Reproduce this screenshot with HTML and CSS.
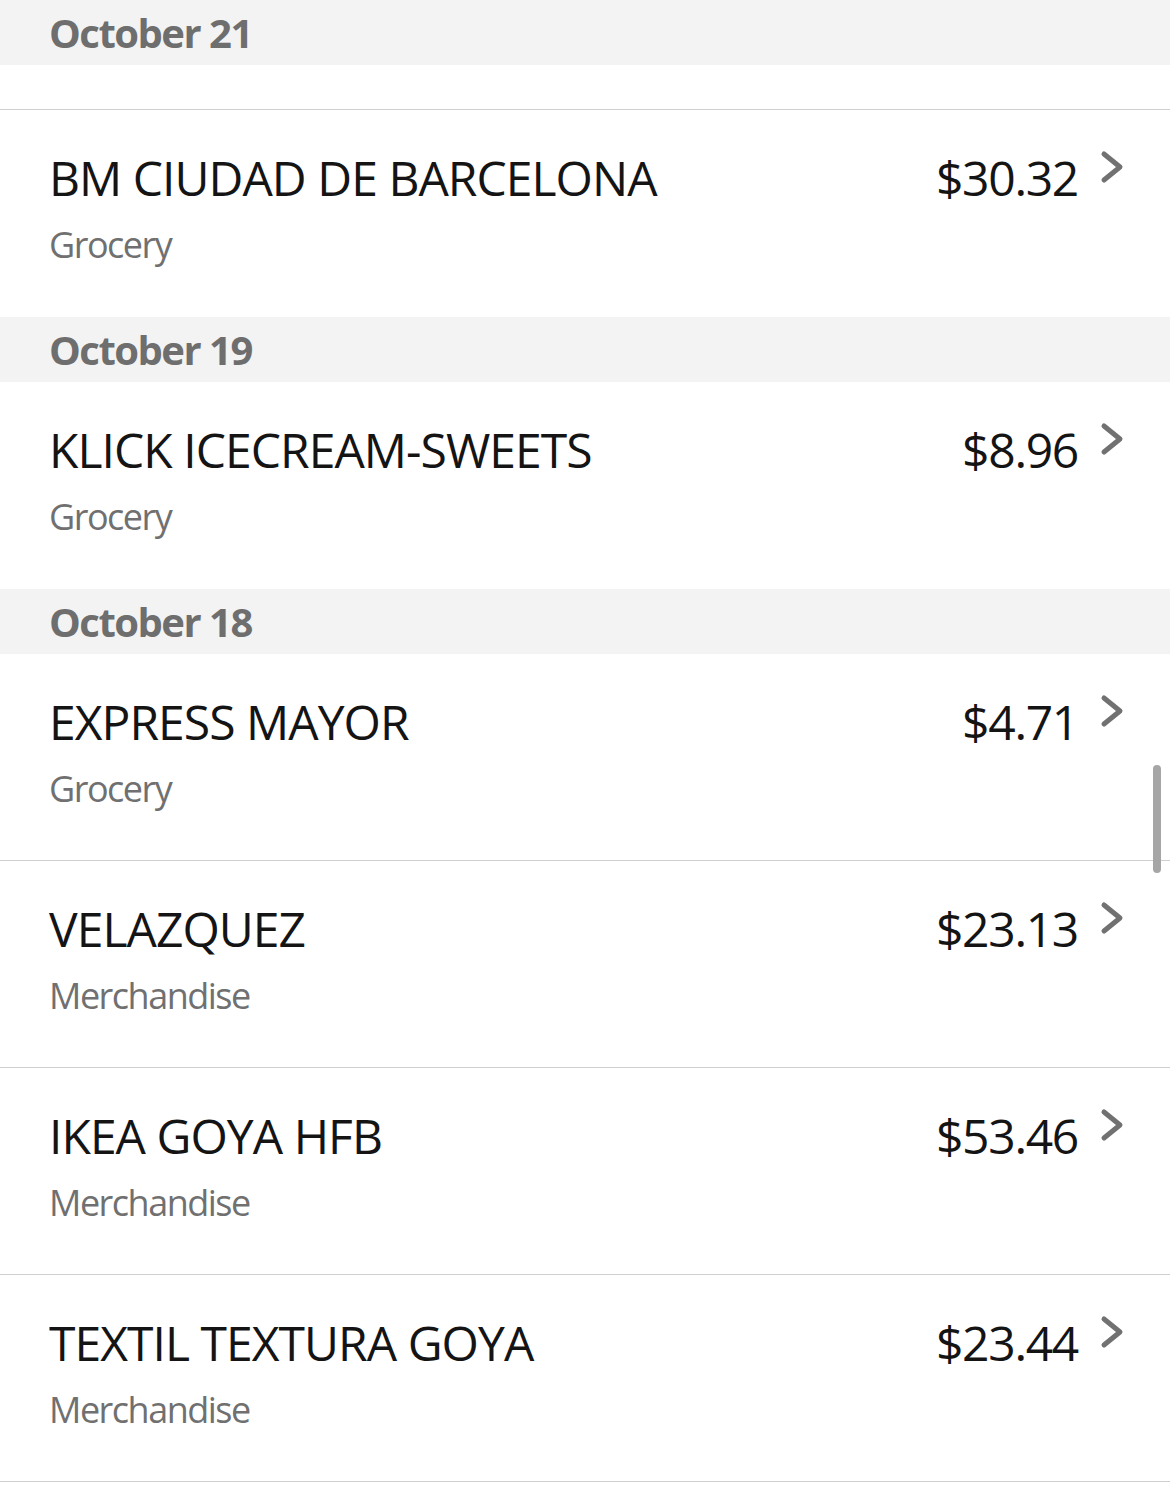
FILE: index.html
```html
<!DOCTYPE html>
<html>
<head>
<meta charset="utf-8">
<link rel="stylesheet" href="styles.css">
</head>
<body>
<div class="list">
  <div class="date-header">October 21</div>
  <div class="spacer"></div>

  <div class="txn">
    <div class="txn-text">
      <div class="txn-name">BM CIUDAD DE BARCELONA</div>
      <div class="txn-cat">Grocery</div>
    </div>
    <div class="txn-amount">$30.32</div>
    <svg class="chevron" viewBox="0 0 24 34" width="24" height="34"><path d="M4 4 L20 17 L4 30" fill="none" stroke="#717171" stroke-width="5" stroke-linecap="round" stroke-linejoin="round"/></svg>
  </div>

  <div class="date-header">October 19</div>
  <div class="txn">
    <div class="txn-text">
      <div class="txn-name">KLICK ICECREAM-SWEETS</div>
      <div class="txn-cat">Grocery</div>
    </div>
    <div class="txn-amount">$8.96</div>
    <svg class="chevron" viewBox="0 0 24 34" width="24" height="34"><path d="M4 4 L20 17 L4 30" fill="none" stroke="#717171" stroke-width="5" stroke-linecap="round" stroke-linejoin="round"/></svg>
  </div>

  <div class="date-header">October 18</div>
  <div class="txn lined">
    <div class="txn-text">
      <div class="txn-name">EXPRESS MAYOR</div>
      <div class="txn-cat">Grocery</div>
    </div>
    <div class="txn-amount">$4.71</div>
    <svg class="chevron" viewBox="0 0 24 34" width="24" height="34"><path d="M4 4 L20 17 L4 30" fill="none" stroke="#717171" stroke-width="5" stroke-linecap="round" stroke-linejoin="round"/></svg>
  </div>
  <div class="txn lined">
    <div class="txn-text">
      <div class="txn-name">VELAZQUEZ</div>
      <div class="txn-cat">Merchandise</div>
    </div>
    <div class="txn-amount">$23.13</div>
    <svg class="chevron" viewBox="0 0 24 34" width="24" height="34"><path d="M4 4 L20 17 L4 30" fill="none" stroke="#717171" stroke-width="5" stroke-linecap="round" stroke-linejoin="round"/></svg>
  </div>
  <div class="txn lined">
    <div class="txn-text">
      <div class="txn-name">IKEA GOYA HFB</div>
      <div class="txn-cat">Merchandise</div>
    </div>
    <div class="txn-amount">$53.46</div>
    <svg class="chevron" viewBox="0 0 24 34" width="24" height="34"><path d="M4 4 L20 17 L4 30" fill="none" stroke="#717171" stroke-width="5" stroke-linecap="round" stroke-linejoin="round"/></svg>
  </div>
  <div class="txn lined">
    <div class="txn-text">
      <div class="txn-name">TEXTIL TEXTURA GOYA</div>
      <div class="txn-cat">Merchandise</div>
    </div>
    <div class="txn-amount">$23.44</div>
    <svg class="chevron" viewBox="0 0 24 34" width="24" height="34"><path d="M4 4 L20 17 L4 30" fill="none" stroke="#717171" stroke-width="5" stroke-linecap="round" stroke-linejoin="round"/></svg>
  </div>
</div>
<div class="scrollbar"></div>
</body>
</html>
```
FILE: styles.css
```css
html, body {
  margin: 0;
  padding: 0;
  background: #ffffff;
}
body {
  font-family: "Open Sans", "Liberation Sans", sans-serif;
  width: 1170px;
  height: 1493px;
  overflow: hidden;
  position: relative;
}
.list {
  display: flex;
  flex-direction: column;
}
.date-header {
  background: #f3f3f3;
  height: 65px;
  box-sizing: border-box;
  padding-left: 49px;
  font-size: 40px;
  font-weight: 700;
  color: #6e6e6e;
  line-height: 66px;
  letter-spacing: -1.5px;
}
.spacer {
  height: 44px;
  border-bottom: 1px solid #cfcfcf;
}
.txn {
  display: flex;
  align-items: flex-start;
  height: 207px;
  box-sizing: border-box;
  padding: 38px 46px 0 49px;
}
.txn.lined {
  border-bottom: 1px solid #cfcfcf;
}
.txn-text {
  flex: 1;
  display: flex;
  flex-direction: column;
}
.txn-name {
  font-size: 48px;
  line-height: 60px;
  color: #141414;
  letter-spacing: -0.95px;
}
.txn-cat {
  font-size: 36px;
  line-height: 48px;
  margin-top: 13px;
  color: #707070;
  letter-spacing: -1.5px;
}
.txn-amount {
  font-size: 48px;
  line-height: 60px;
  color: #141414;
  letter-spacing: -1.3px;
}
.chevron {
  margin-left: 22px;
  margin-top: 2px;
  flex: none;
}
.scrollbar {
  position: absolute;
  left: 1153px;
  top: 765px;
  width: 8px;
  height: 108px;
  border-radius: 4px;
  background: #a6a6a6;
}
```
